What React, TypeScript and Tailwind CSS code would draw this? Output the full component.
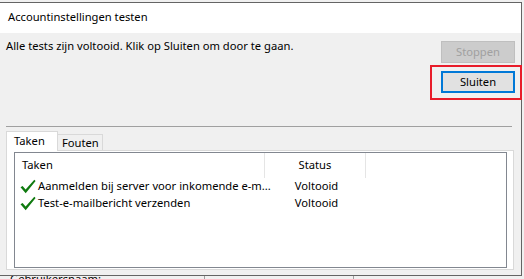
import React from 'react';

const Check: React.FC = () => (
  <svg width="16" height="15" viewBox="0 0 16 15" className="shrink-0">
    <path d="M0.5 8.2 L2.6 6.9 L5.6 10.6 L14.3 0.8 L15.6 1.9 L5.7 14.2 Z" fill="#0f7a0f" />
  </svg>
);

const tasks = [
  { name: 'Aanmelden bij server voor inkomende e-m...', status: 'Voltooid' },
  { name: 'Test-e-mailbericht verzenden', status: 'Voltooid' },
];

const App: React.FC = () => {
  return (
    <div className="w-[524px] h-[279px] bg-[#f0f0f0] overflow-hidden text-[11.2px] text-black font-['Segoe_UI','Noto_Sans',sans-serif]">
      <div className="h-[2px]" />
      <div className="flex">
        <div className="w-[522px] h-[274px] flex flex-col border-t border-r border-b border-[#646464]">
          {/* title bar */}
          <div className="h-[30px] bg-white flex items-center pl-[8px] pb-px">
            Accountinstellingen testen
          </div>

          {/* body */}
          <div className="flex-1 flex flex-col bg-[#f0f0f0]">
            <div className="h-[93px] flex justify-between pl-[6px] pr-[6px]">
              <p className="pt-[5px] leading-[16px]">
                Alle tests zijn voltooid. Klik op Sluiten om door te gaan.
              </p>
              <div className="flex flex-col pt-[8px]">
                <button
                  disabled
                  className="w-[74px] h-[22px] bg-[#cccccc] border border-[#bfbfbf] text-[#a0a0a0] leading-none"
                >
                  Stoppen
                </button>
                <div className="relative mt-[8px]">
                  <button className="w-[74px] h-[22px] bg-[#e1e1e1] border-2 border-[#0078d7] text-black leading-none">
                    Sluiten
                  </button>
                  <div className="absolute -left-[11px] -top-[6px] -right-[7px] -bottom-[7px] border-2 border-[#e81c2a] pointer-events-none" />
                </div>
              </div>
            </div>

            <div className="h-px bg-[#a0a0a0] ml-[6px] mr-[9px]" />

            {/* tabs */}
            <div className="flex items-end h-[19px] mt-[4px] ml-[6px]">
              <div className="relative z-10 -mb-px h-[20px] w-[52px] bg-white border-x border-t border-[#d9d9d9] pl-[7px] pt-[2px] leading-[14px]">
                Taken
              </div>
              <div className="h-[16px] w-[45px] bg-[#f0f0f0] border-r border-t border-[#d9d9d9] pl-[4px] leading-[15px]">
                Fouten
              </div>
            </div>

            <div className="ml-[6px] w-[508px] h-[120px] bg-white border border-[#d9d9d9]">
              <div className="ml-[7px] mt-[1px] w-[493px] h-[116px] border border-[#828790] bg-white">
                <div className="flex h-[25px] items-center">
                  <div className="w-[250px] h-full flex items-center pl-[7px] border-r border-[#e5e5e5]">
                    Taken
                  </div>
                  <div className="w-[101px] h-full flex items-center justify-center border-r border-[#e5e5e5]">
                    Status
                  </div>
                </div>
                {tasks.map((t) => (
                  <div key={t.name} className="flex h-[17px] items-center">
                    <div className="w-[251px] flex items-center pl-[5px] gap-[2px] whitespace-nowrap">
                      <Check />
                      <span>{t.name}</span>
                    </div>
                    <div className="w-[101px] text-center">{t.status}</div>
                  </div>
                ))}
              </div>
            </div>
          </div>
        </div>
        <div className="flex-1" />
      </div>

      {/* background window peeking out below */}
      <div className="h-[3px] overflow-hidden flex">
        <div className="-mt-[5px] pl-[10px] w-[205px] border-r border-[#a0a0a0] leading-[16px]">Gebruikersnaam:</div>
        <div className="w-[149px] border-r border-[#a0a0a0]" />
      </div>
    </div>
  );
};

export default App;
